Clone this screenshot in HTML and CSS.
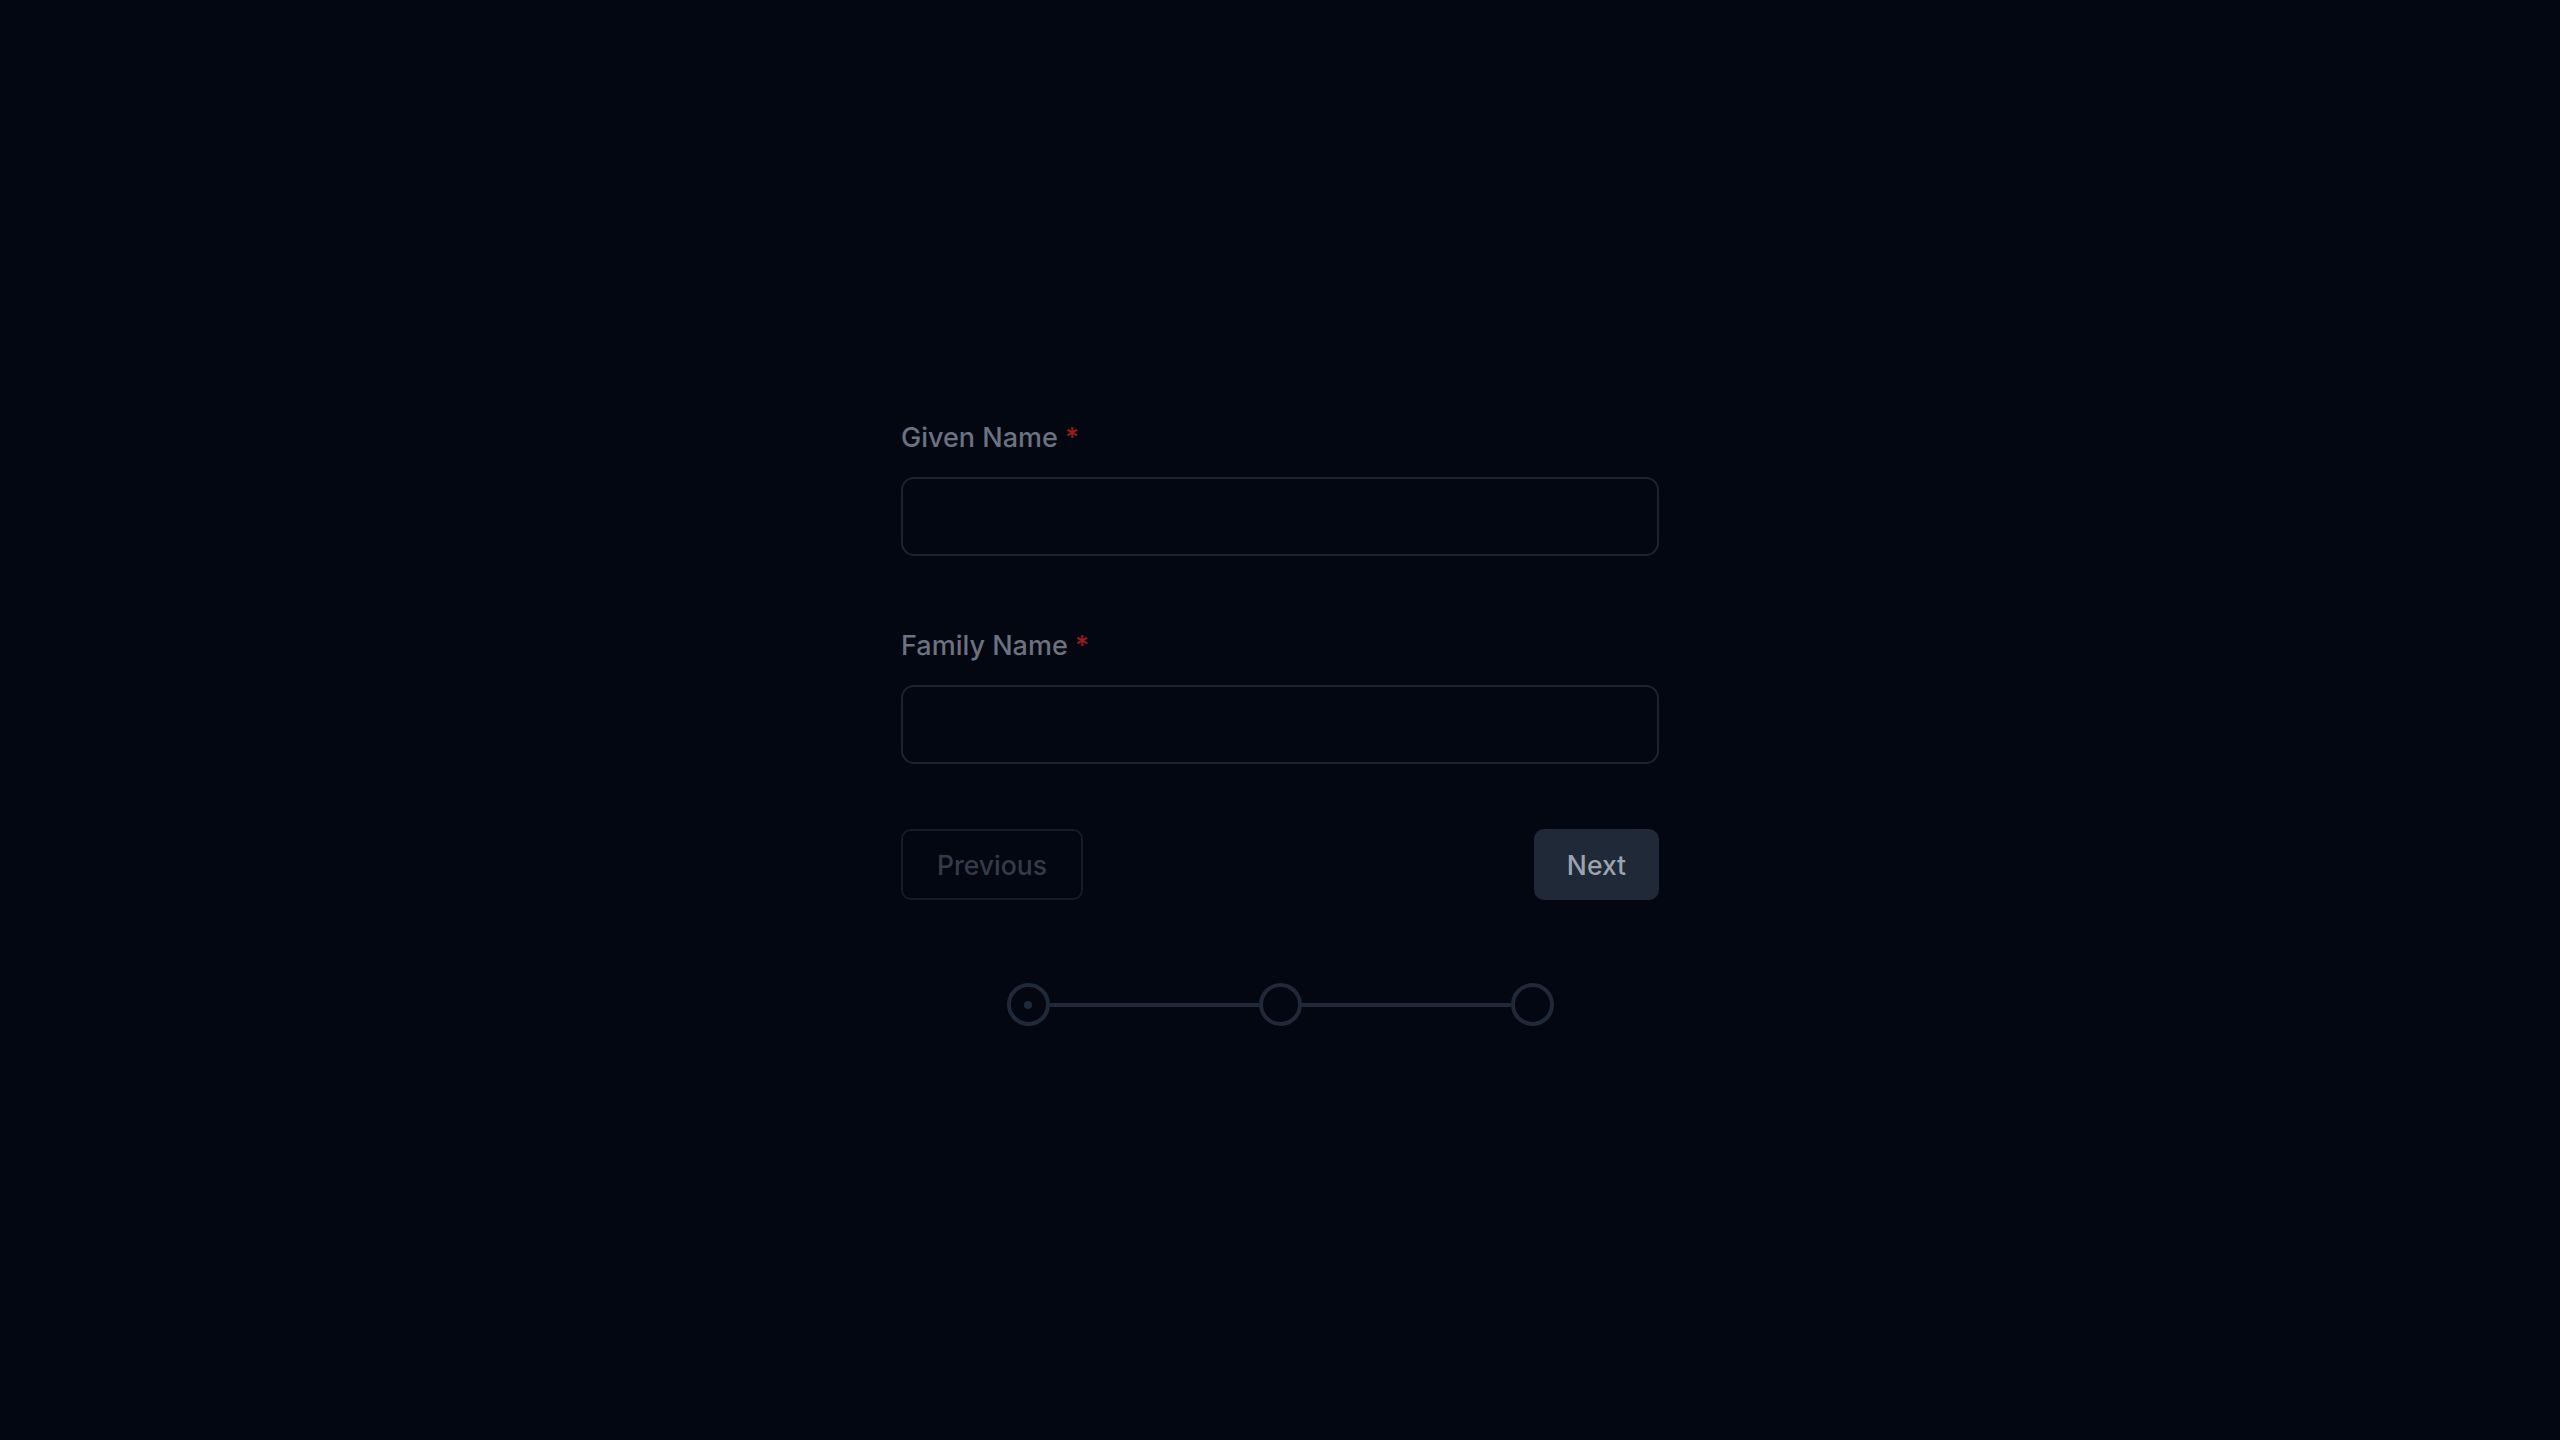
FILE: index.html
```html
<!DOCTYPE html>
<html lang="en">
<head>
<meta charset="utf-8">
<title>Form</title>
<link rel="stylesheet" href="styles.css">
</head>
<body>
<main class="page">
  <form class="wizard">
    <div class="field">
      <label class="label" for="given">Given Name <span class="req">*</span></label>
      <input class="input" id="given" type="text">
    </div>
    <div class="field">
      <label class="label" for="family">Family Name <span class="req">*</span></label>
      <input class="input" id="family" type="text">
    </div>
    <div class="actions">
      <button type="button" class="btn btn-prev">Previous</button>
      <button type="button" class="btn btn-next">Next</button>
    </div>
    <div class="steps">
      <span class="step step-current"><span class="dot"></span></span>
      <span class="bar"></span>
      <span class="step"></span>
      <span class="bar"></span>
      <span class="step"></span>
    </div>
  </form>
</main>
</body>
</html>
```

FILE: styles.css
```css
html, body {
  margin: 0;
  padding: 0;
  background: #030712;
  height: 100%;
}

body {
  font-family: Inter, "Noto Sans", "Liberation Sans", sans-serif;
  color: #9ca3af;
}

.page {
  min-height: 100%;
  display: flex;
  justify-content: center;
  align-items: flex-start;
  padding-top: 419px;
  box-sizing: border-box;
}

.wizard {
  width: 758px;
  display: flex;
  flex-direction: column;
}

.field {
  display: flex;
  flex-direction: column;
  margin-bottom: 71px;
}

.field + .field {
  margin-bottom: 65px;
}

.label {
  font-size: 27px;
  line-height: 38.4px;
  font-weight: 500;
  color: #6b7280;
  margin-bottom: 19.6px;
}

.req {
  color: #991b1b;
}

.input {
  height: 79px;
  box-sizing: border-box;
  border: 2px solid #1b2330;
  border-radius: 13px;
  background: #030712;
  outline: none;
  font: inherit;
  color: #d1d5db;
  padding: 0 20px;
  margin: 0;
}

.actions {
  display: flex;
  justify-content: space-between;
  align-items: center;
}

.btn {
  height: 71px;
  box-sizing: border-box;
  border-radius: 10px;
  font-family: Inter, "Noto Sans", "Liberation Sans", sans-serif;
  font-size: 26.5px;
  font-weight: 500;
  padding: 0;
  cursor: pointer;
  display: flex;
  align-items: center;
  justify-content: center;
}

.btn-prev {
  width: 182px;
  background: transparent;
  border: 2px solid #151b27;
  color: #343b48;
}

.btn-next {
  width: 125px;
  background: #1f2937;
  border: none;
  color: #9ca3af;
}

.steps {
  display: flex;
  align-items: center;
  align-self: center;
  margin-top: 83px;
}

.step {
  width: 43px;
  height: 43px;
  box-sizing: border-box;
  border: 4px solid #1f2937;
  border-radius: 50%;
  display: flex;
  align-items: center;
  justify-content: center;
  flex: none;
}

.dot {
  width: 8px;
  height: 8px;
  border-radius: 50%;
  background: #1f2937;
}

.bar {
  width: 209px;
  height: 4px;
  background: #1f2937;
  flex: none;
}
```
